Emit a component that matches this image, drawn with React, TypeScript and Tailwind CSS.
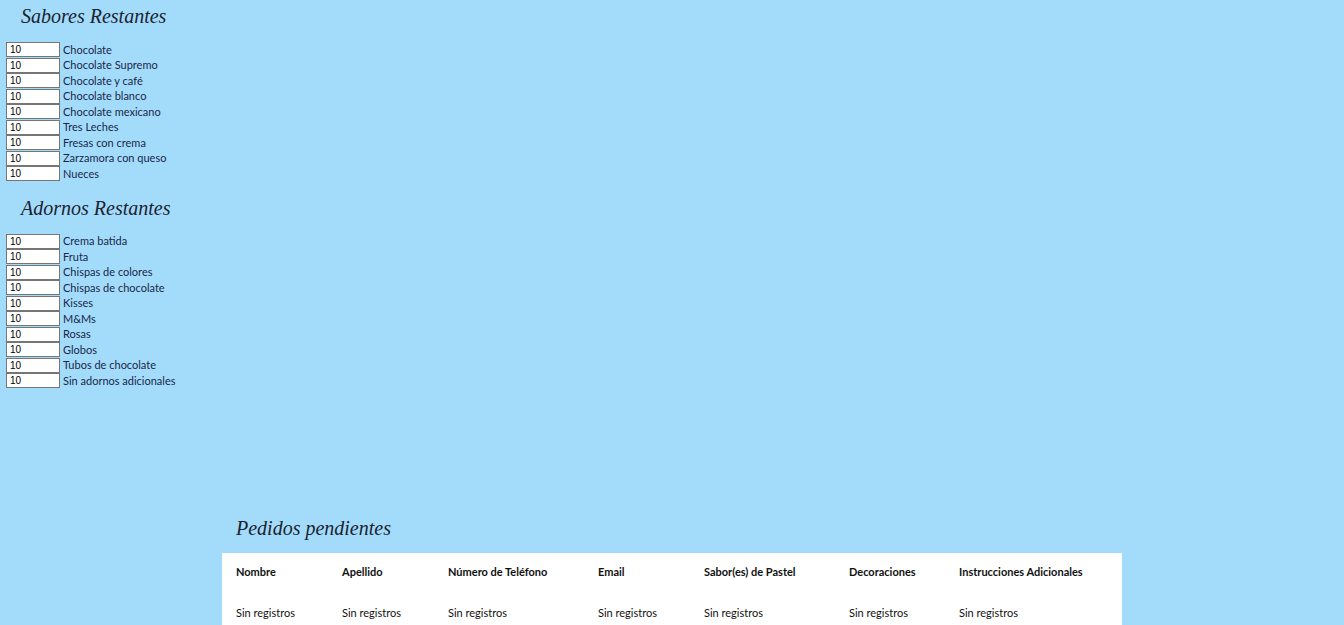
import React from "react";

const sabores = ["Chocolate","Chocolate Supremo","Chocolate y café","Chocolate blanco","Chocolate mexicano","Tres Leches","Fresas con crema","Zarzamora con queso","Nueces"];
const adornos = ["Crema batida","Fruta","Chispas de colores","Chispas de chocolate","Kisses","M&Ms","Rosas","Globos","Tubos de chocolate","Sin adornos adicionales"];
const cols = ["Nombre","Apellido","Número de Teléfono","Email","Sabor(es) de Pastel","Decoraciones","Instrucciones Adicionales"];

function Heading({ children }: { children: React.ReactNode }) {
  return (
    <h2 className="text-[20px] italic text-[#1c2230] leading-[24px]" style={{ fontFamily: '"Liberation Serif", serif' }}>
      {children}
    </h2>
  );
}

function List({ items }: { items: string[] }) {
  return (
    <div className="flex flex-col pl-[6px]">
      {items.map((t) => (
        <div key={t} className="flex items-center h-[15.5px]">
          <input
            readOnly
            value="10"
            className="w-[54px] h-[15px] border border-[#767676] bg-white text-[10px] text-black px-[3px] leading-none outline-none"
            style={{ fontFamily: '"Liberation Sans", Arial, sans-serif' }}
          />
          <span className="ml-[3px] text-[11px] text-[#1a2748] leading-none -mt-[1px]" style={{ fontFamily: 'Lato, sans-serif' }}>{t}</span>
        </div>
      ))}
    </div>
  );
}

export default function App() {
  return (
    <div className="w-[1344px] h-[625px] bg-[#a3dcfb] overflow-hidden" style={{ fontFamily: 'Lato, sans-serif' }}>
      <div className="pl-[21px] pt-[4px]"><Heading>Sabores Restantes</Heading></div>
      <div className="mt-[14px]"><List items={sabores} /></div>
      <div className="pl-[21px] mt-[14px]"><Heading>Adornos Restantes</Heading></div>
      <div className="mt-[14px]"><List items={adornos} /></div>
      <div className="ml-[222px] mt-[127px] w-[900px]">
        <div className="pl-[14px] h-[37px]"><Heading>Pedidos pendientes</Heading></div>
        <div className="bg-white grid grid-cols-[106px_106px_150px_106px_145px_110px_177px] text-[11px] text-[#111]">
          {cols.map((c) => (
            <div key={c} className="pl-[14px] h-[40px] flex items-center font-bold">{c}</div>
          ))}
          {cols.map((c) => (
            <div key={c + "v"} className="pl-[14px] h-[42px] flex items-center">Sin registros</div>
          ))}
        </div>
      </div>
    </div>
  );
}
